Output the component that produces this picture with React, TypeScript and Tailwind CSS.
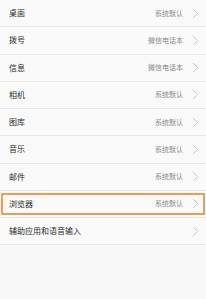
import React from "react";

const rows: { label: string; value?: string; highlight?: boolean }[] = [
  { label: "桌面", value: "系统默认" },
  { label: "拨号", value: "微信电话本" },
  { label: "信息", value: "微信电话本" },
  { label: "相机", value: "系统默认" },
  { label: "图库", value: "系统默认" },
  { label: "音乐", value: "系统默认" },
  { label: "邮件", value: "系统默认" },
  { label: "浏览器", value: "系统默认", highlight: true },
  { label: "辅助应用和语音输入" },
];

function Chevron() {
  return (
    <svg width="7" height="11" viewBox="0 0 7 11" className="shrink-0">
      <polyline points="1,1 5.5,5.5 1,10" fill="none" stroke="#c9c9c9" strokeWidth="1" />
    </svg>
  );
}

export default function App() {
  return (
    <div
      className="w-[206px] h-[299px] bg-[#f8f8f8] overflow-hidden"
      style={{ fontFamily: '"Noto Sans CJK SC", "Noto Sans", sans-serif' }}
    >
      {rows.map((r) => (
        <div
          key={r.label}
          className="relative flex items-center h-[27.25px] border-b border-[#e9e9e9] pl-[9px] pr-[7px] bg-[#fafafa]"
        >
          <span className="text-[8px] leading-none text-[#2a2a2a] flex-1">{r.label}</span>
          {r.value && (
            <span className="text-[7px] leading-none text-[#8a8a8a] mr-[9px]">{r.value}</span>
          )}
          <Chevron />
          {r.highlight && (
            <div className="absolute left-[1px] right-[1px] top-[2px] bottom-[2px] border-2 border-[#f29a52] rounded-[1px]" />
          )}
        </div>
      ))}
    </div>
  );
}
